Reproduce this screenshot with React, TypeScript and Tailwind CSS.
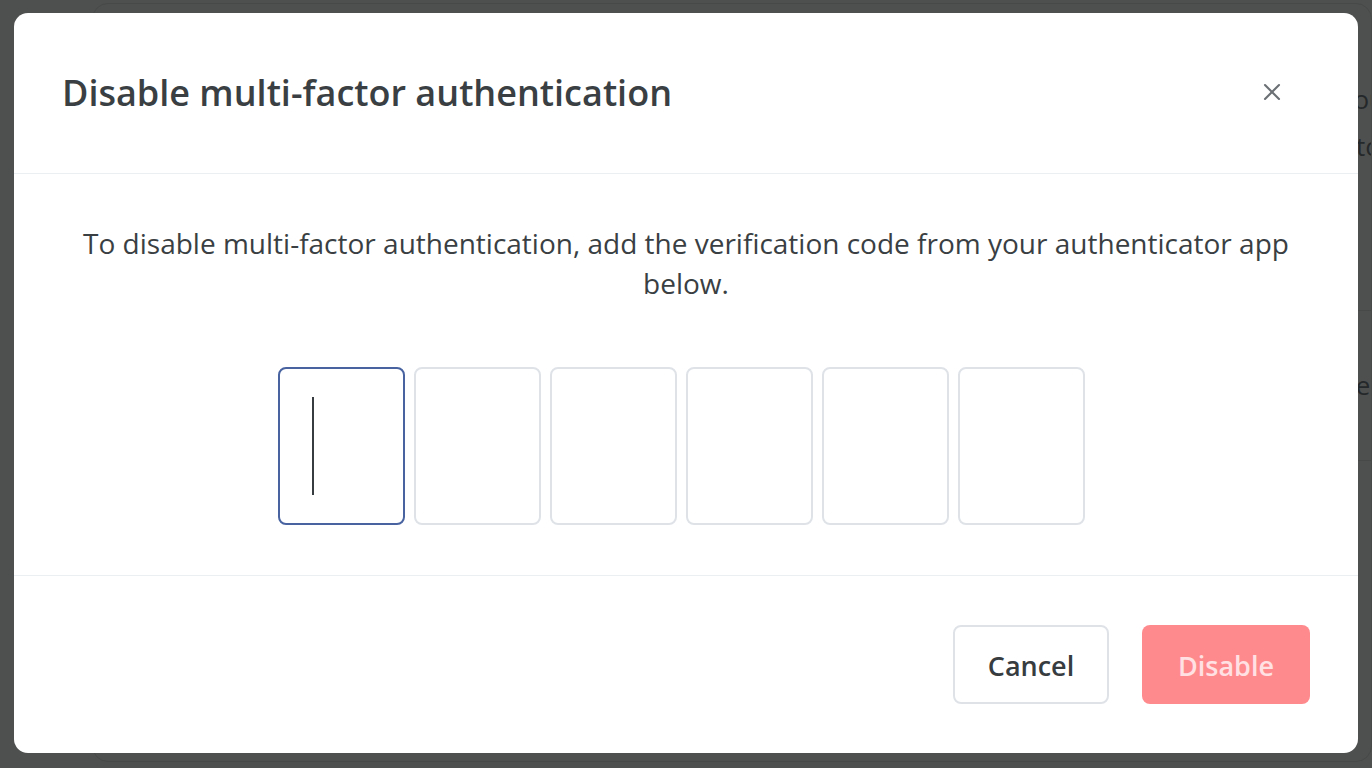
import { X } from "lucide-react";

const font = { fontFamily: '"Open Sans", "Noto Sans", sans-serif' };

function BackgroundPage() {
  // faint content of the page behind the overlay
  return (
    <div className="absolute inset-0 flex bg-[#4e504f]">
      <div className="w-[92px] shrink-0" />
      <div className="flex-1 mt-[3px] mb-[6px] rounded-2xl border border-[#474948] flex flex-col">
        <div className="h-[306px] flex flex-col items-end pt-[76px] gap-[8px] text-[26px] text-[#25282a] overflow-hidden">
          <span className="translate-x-[14px]">you</span>
          <span className="translate-x-[10px]">to</span>
        </div>
        <div className="h-[150px] border-t border-[#474948] flex items-center justify-end text-[26px] text-[#25282a] overflow-hidden">
          <span className="translate-x-[14px]">see</span>
        </div>
        <div className="flex-1 border-t border-[#474948]" />
      </div>
    </div>
  );
}

export default function App() {
  const digits = [0, 1, 2, 3, 4, 5];

  return (
    <div className="relative w-[1372px] h-[768px] overflow-hidden" style={font}>
      <BackgroundPage />

      {/* Modal */}
      <div className="absolute inset-0 flex items-center justify-center pb-[2px]">
        <div className="w-[1344px] h-[740px] bg-white rounded-[14px] flex flex-col text-[#373c40]">
          {/* Header */}
          <div className="h-[161px] shrink-0 border-b border-[#eceff2] flex items-center justify-between pl-[48px] pr-[72px]">
            <h2 className="text-[36px] font-semibold text-[#3a3f43]">
              Disable multi-factor authentication
            </h2>
            <button className="text-[#6b7075] -mt-[2px]">
              <X size={28} strokeWidth={1.8} />
            </button>
          </div>

          {/* Body */}
          <div className="h-[402px] shrink-0 border-b border-[#eceff2] px-[48px] pt-[49px] flex flex-col items-center">
            <p className="text-[28px] leading-[40px] text-center text-[#3a3f43]">
              To disable multi-factor authentication, add the verification code from your authenticator app below.
            </p>
            <div className="mt-[64px] flex gap-[9px] pr-[9px]">
              {digits.map((d) => (
                <div
                  key={d}
                  className={
                    d === 0
                      ? "w-[127px] h-[158px] rounded-[8px] border-2 border-[#4863a0] flex items-center pl-[32px]"
                      : "w-[127px] h-[158px] rounded-[8px] border-2 border-[#dfe3e8]"
                  }
                >
                  {d === 0 && <span className="block w-[2px] h-[98px] bg-[#373c40]" />}
                </div>
              ))}
            </div>
          </div>

          {/* Footer */}
          <div className="flex-1 flex items-start justify-end gap-[33px] pt-[49px] pr-[48px]">
            <button className="w-[156px] h-[79px] pt-[3px] rounded-[8px] border-2 border-[#dfe3e8] text-[27px] font-semibold text-[#373c40]">
              Cancel
            </button>
            <button className="w-[168px] h-[79px] pt-[3px] rounded-[8px] bg-[#ff8a8e] text-[27px] font-semibold text-[#ffe1e3]">
              Disable
            </button>
          </div>
        </div>
      </div>
    </div>
  );
}
